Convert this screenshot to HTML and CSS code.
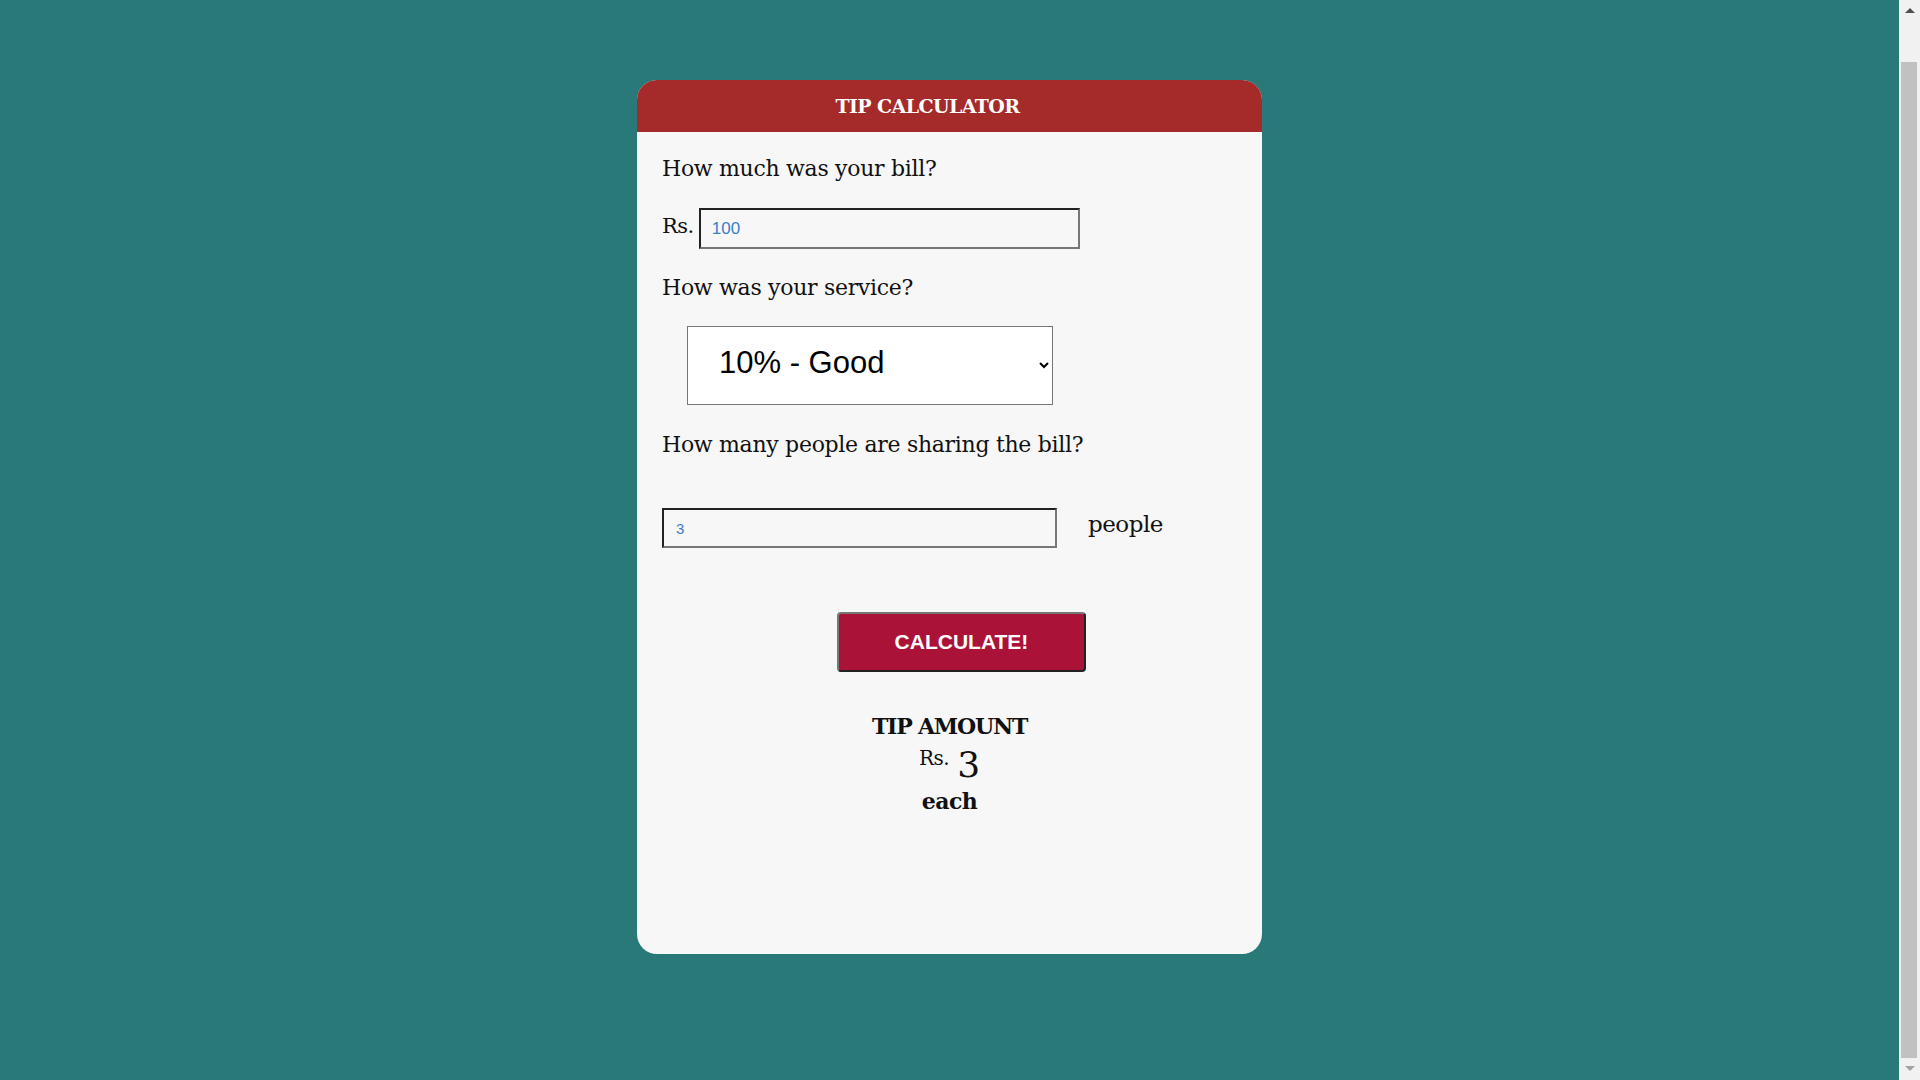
FILE: index.html
```html
<!DOCTYPE html>
<html lang="en">
<head>
<meta charset="utf-8">
<title>Tip Calculator</title>
<link rel="stylesheet" href="styles.css">
</head>
<body>
<div class="page">
  <div class="card">
    <div class="card-header"><h1 class="title">TIP CALCULATOR</h1></div>
    <div class="card-body">
      <p class="question q-bill">How much was your bill?</p>
      <div class="bill-row">
        <span class="currency">Rs.</span>
        <input class="field field-bill" type="text" value="100">
      </div>
      <p class="question q-service">How was your service?</p>
      <div class="select-row">
        <select class="service">
          <option>30% - Outstanding</option>
          <option>20% - Good</option>
          <option selected>10% - Good</option>
          <option>5% - Bad</option>
        </select>
      </div>
      <p class="question q-people">How many people are sharing the bill?</p>
      <div class="people-row">
        <input class="field field-people" type="text" value="3">
        <span class="people-label">people</span>
      </div>
      <div class="button-row">
        <button class="calc-btn" type="button">CALCULATE!</button>
      </div>
      <div class="result">
        <div class="result-title">TIP AMOUNT</div>
        <div class="result-value"><span class="result-cur">Rs.</span><span class="result-num">3</span></div>
        <div class="result-each">each</div>
      </div>
    </div>
  </div>
</div>
<div class="scrollbar" aria-hidden="true">
  <div class="sb-arrow sb-up"></div>
  <div class="sb-thumb"></div>
  <div class="sb-arrow sb-down"></div>
</div>
</body>
</html>
```
FILE: styles.css
```css
html, body {
  margin: 0;
  padding: 0;
}
body {
  background: #297979;
  font-family: "DejaVu Serif", "Liberation Serif", serif;
  color: #111;
  overflow: hidden;
}
.page {
  display: flex;
  justify-content: center;
  padding: 80px 21px 0 0;
}
.card {
  width: 625px;
  height: 874px;
  background: #f7f7f7;
  border-radius: 20px;
  overflow: hidden;
  display: flex;
  flex-direction: column;
}
.card-header {
  background: #a52a2a;
  height: 52px;
  display: flex;
  align-items: center;
  justify-content: center;
  padding-right: 44px;
}
.title {
  margin: 0;
  color: #fff;
  font-size: 19px;
  font-weight: bold;
  letter-spacing: -0.6px;
}
.card-body {
  padding: 0 25px;
  display: flex;
  flex-direction: column;
}
.question {
  margin: 0;
  font-size: 22px;
  line-height: 24px;
  letter-spacing: -0.3px;
}
.q-bill { margin-top: 25px; }
.bill-row {
  display: flex;
  align-items: center;
  margin-top: 27px;
}
.currency {
  font-size: 21px;
  margin-right: 5px;
  letter-spacing: -0.5px;
  position: relative;
  top: -3px;
}
.field {
  box-sizing: border-box;
  background: transparent;
  border-style: solid;
  border-width: 2px;
  border-color: #222 #777 #777 #222;
  font-family: "Liberation Sans", Arial, sans-serif;
  color: #3b7fc4;
  outline: none;
}
.field-bill {
  width: 381px;
  height: 41px;
  font-size: 17px;
  padding: 0 0 0 11px;
}
.q-service { margin-top: 27px; }
.select-row {
  margin-top: 26px;
  padding-left: 25px;
}
.service {
  box-sizing: border-box;
  width: 366px;
  height: 79px;
  background: #fff;
  border: 1px solid #767676;
  border-radius: 0;
  font-family: "Liberation Sans", Arial, sans-serif;
  font-size: 31px;
  color: #000;
  padding: 0 0 6px 27px;
  outline: none;
}
.q-people { margin-top: 28px; }
.people-row {
  display: flex;
  align-items: center;
  margin-top: 51px;
}
.field-people {
  width: 395px;
  height: 40px;
  font-size: 15px;
  padding: 0 0 0 12px;
}
.people-label {
  font-size: 23px;
  margin-left: 31px;
  position: relative;
  top: -4px;
  letter-spacing: -0.5px;
}
.button-row {
  margin-top: 64px;
  display: flex;
  padding-left: 175px;
}
.calc-btn {
  box-sizing: border-box;
  width: 249px;
  height: 60px;
  background: #ab1237;
  color: #fff;
  border-style: solid;
  border-width: 2px;
  border-color: #777 #222 #222 #777;
  border-radius: 4px;
  font-family: "Liberation Sans", Arial, sans-serif;
  font-weight: bold;
  font-size: 21px;
  cursor: pointer;
}
.result {
  margin-top: 39px;
  display: flex;
  flex-direction: column;
  align-items: center;
  margin-left: -25px;
  margin-right: -25px;
}
.result-title {
  font-size: 22px;
  font-weight: bold;
  line-height: 30px;
  letter-spacing: -1.2px;
}
.result-value {
  display: flex;
  align-items: flex-start;
  gap: 8px;
}
.result-cur {
  font-size: 20px;
  line-height: 34px;
  letter-spacing: -0.5px;
}
.result-num {
  font-size: 36px;
  font-weight: 300;
  line-height: 48px;
}
.result-each {
  font-size: 22px;
  font-weight: bold;
  line-height: 24px;
  letter-spacing: -0.5px;
}
.scrollbar {
  position: fixed;
  top: 0;
  right: 0;
  width: 21px;
  height: 100vh;
  background: #f1f1f1;
}
.sb-thumb {
  position: absolute;
  left: 2px;
  right: 3px;
  top: 62px;
  height: 996px;
  background: #c1c1c1;
}
.sb-arrow {
  position: absolute;
  left: 50%;
  width: 0;
  height: 0;
  margin-left: -5px;
  border-left: 5px solid transparent;
  border-right: 5px solid transparent;
}
.sb-up {
  top: 8px;
  border-bottom: 5px solid #505050;
}
.sb-down {
  top: 1066px;
  border-top: 5px solid #a3a3a3;
}
```
